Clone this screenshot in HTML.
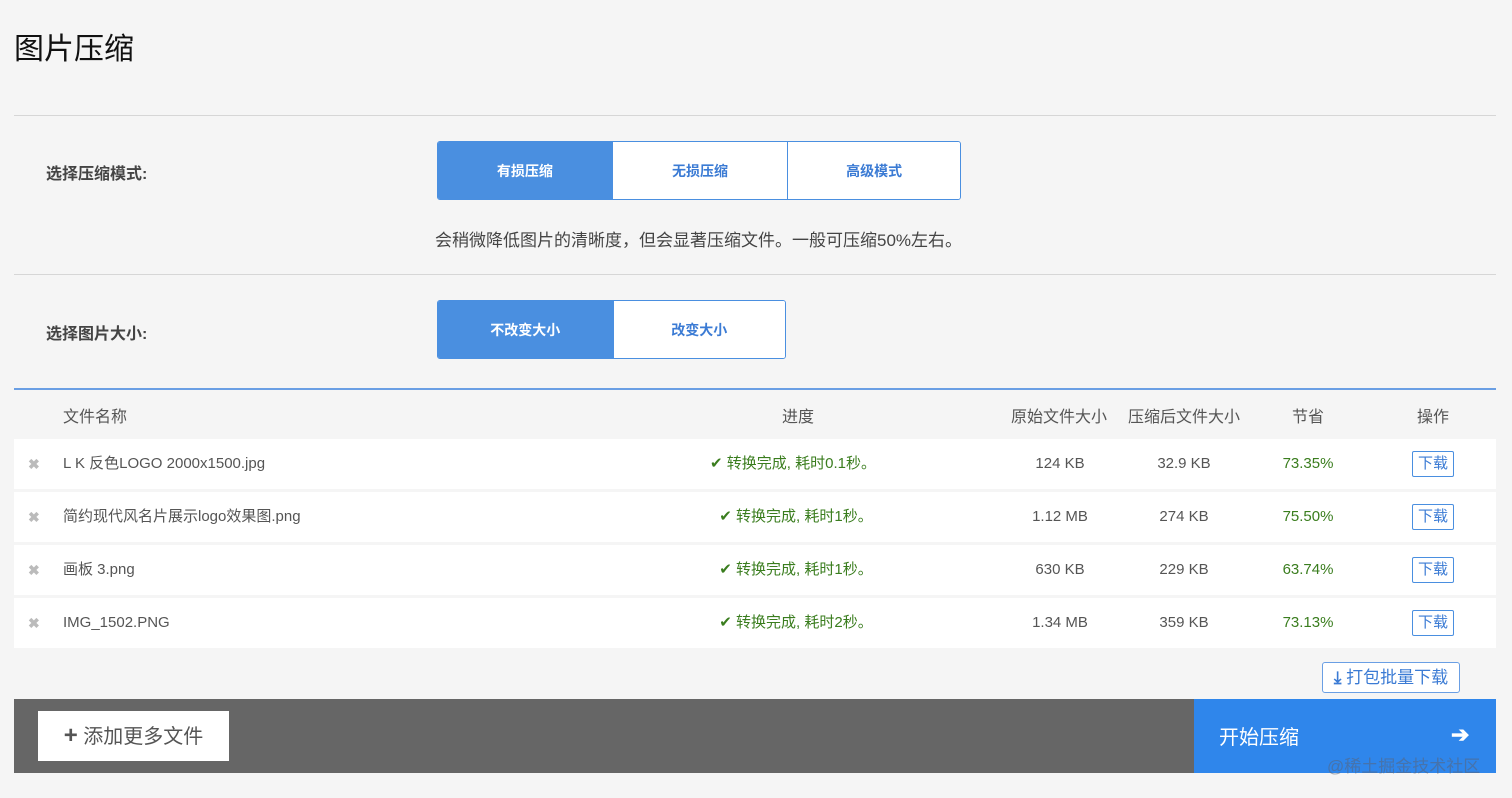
<!DOCTYPE html>
<html><head><meta charset="utf-8"><style>
*{margin:0;padding:0;box-sizing:border-box}
body{width:1512px;height:798px;background:#f5f5f5;font-family:"Liberation Sans","Noto Sans CJK SC",sans-serif;position:relative;overflow:hidden;color:#333}
.a{position:absolute}
.hr{position:absolute;left:14px;width:1482px;height:1px;background:#d6d6d6}
.lbl{position:absolute;left:46px;font-size:16px;font-weight:bold;color:#444}
.seg{position:absolute;display:flex;border:1px solid #4a8fe0;border-radius:3px;overflow:hidden;height:59px}
.seg div{display:flex;align-items:center;justify-content:center;font-size:14px;font-weight:bold;color:#3b7bd4;border-left:1px solid #4a8fe0;background:#fff}
.seg div:first-child{border-left:none;background:#4a8fe0;color:#fff}
.row{position:absolute;left:14px;width:1482px;height:50px;background:#fff}
.row span{position:absolute;top:0;line-height:50px;font-size:15px;color:#555}
.x{left:14px;color:#bbb!important;font-size:14px!important;font-weight:bold}
.c{transform:translateX(-50%);white-space:nowrap}
.g{color:#3a7d1e!important}
.dl{top:12px!important;line-height:24px!important;height:26px;width:42px;border:1px solid #4a8fe0;border-radius:2px;color:#3b7bd4!important;text-align:center}
.th{position:absolute;top:403px;font-size:16px;color:#555}
</style></head><body>
<div class="a" style="left:14px;top:24px;font-size:30px;color:#111">图片压缩</div>
<div class="hr" style="top:115px"></div>
<div class="lbl" style="top:160px">选择压缩模式:</div>
<div class="seg" style="left:437px;top:141px;width:524px"><div style="width:174px">有损压缩</div><div style="width:176px">无损压缩</div><div style="width:173px">高级模式</div></div>
<div class="a" style="left:435px;top:226px;font-size:17px;color:#444;white-space:nowrap">会稍微降低图片的清晰度，但会显著压缩文件。一般可压缩50%左右。</div>
<div class="hr" style="top:274px"></div>
<div class="lbl" style="top:320px">选择图片大小:</div>
<div class="seg" style="left:437px;top:300px;width:349px"><div style="width:175px">不改变大小</div><div style="width:173px">改变大小</div></div>
<div class="a" style="left:14px;top:388px;width:1482px;height:2px;background:#6a9fe4"></div>
<div class="th" style="left:63px">文件名称</div>
<div class="th c" style="left:798px">进度</div>
<div class="th c" style="left:1059px">原始文件大小</div>
<div class="th c" style="left:1184px">压缩后文件大小</div>
<div class="th c" style="left:1308px">节省</div>
<div class="th c" style="left:1433px">操作</div>

<div class="row" style="top:439px"><span class="x">✖</span><span style="left:49px">L K 反色LOGO 2000x1500.jpg</span><span class="c g" style="left:779px">✔ 转换完成, 耗时0.1秒。</span><span class="c" style="left:1046px">124 KB</span><span class="c" style="left:1170px">32.9 KB</span><span class="c g" style="left:1294px">73.35%</span><span class="dl" style="left:1398px">下载</span></div>
<div class="row" style="top:492px"><span class="x">✖</span><span style="left:49px">简约现代风名片展示logo效果图.png</span><span class="c g" style="left:782px">✔ 转换完成, 耗时1秒。</span><span class="c" style="left:1046px">1.12 MB</span><span class="c" style="left:1170px">274 KB</span><span class="c g" style="left:1294px">75.50%</span><span class="dl" style="left:1398px">下载</span></div>
<div class="row" style="top:545px"><span class="x">✖</span><span style="left:49px">画板 3.png</span><span class="c g" style="left:782px">✔ 转换完成, 耗时1秒。</span><span class="c" style="left:1046px">630 KB</span><span class="c" style="left:1170px">229 KB</span><span class="c g" style="left:1294px">63.74%</span><span class="dl" style="left:1398px">下载</span></div>
<div class="row" style="top:598px"><span class="x">✖</span><span style="left:49px">IMG_1502.PNG</span><span class="c g" style="left:782px">✔ 转换完成, 耗时2秒。</span><span class="c" style="left:1046px">1.34 MB</span><span class="c" style="left:1170px">359 KB</span><span class="c g" style="left:1294px">73.13%</span><span class="dl" style="left:1398px">下载</span></div>

<div class="a" style="left:1322px;top:662px;width:138px;height:31px;border:1px solid #6a9fe4;border-radius:3px;color:#3b7bd4;font-size:17px;line-height:29px;text-align:center;background:#fff"><b>⤓</b> 打包批量下载</div>
<div class="a" style="left:14px;top:699px;width:1180px;height:74px;background:#666"></div>
<div class="a" style="left:38px;top:711px;width:191px;height:50px;background:#fff;font-size:20px;color:#555;line-height:50px;text-align:center"><b style="font-size:24px">+</b> 添加更多文件</div>
<div class="a" style="left:1194px;top:699px;width:302px;height:74px;background:#2f86eb"></div>
<div class="a" style="left:1219px;top:721px;font-size:20px;color:#fff">开始压缩</div>
<div class="a" style="left:1451px;top:722px;font-size:22px;color:#fff;font-weight:bold">➔</div>
<div class="a" style="left:1327px;top:752px;font-size:17px;color:rgba(90,100,120,.55)">@稀土掘金技术社区</div>
</body></html>
